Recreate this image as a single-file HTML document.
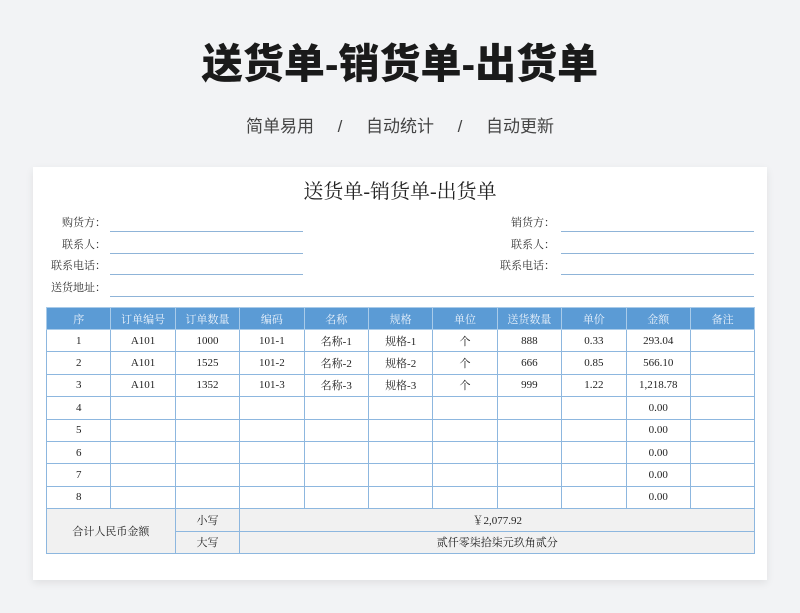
<!DOCTYPE html>
<html><head><meta charset="utf-8"><style>
*{margin:0;padding:0;box-sizing:border-box}
body{width:800px;height:613px;background:#f2f3f5;position:relative;overflow:hidden;font-family:"Liberation Serif","Noto Serif CJK SC",serif;color:#222}
.h1{position:absolute;top:30px;left:0;width:800px;text-align:center;font:900 41px "Liberation Sans","Noto Sans CJK SC",sans-serif;color:#1a1a1a}
.sub{position:absolute;top:112px;left:0;width:800px;text-align:center;font:17px "Liberation Sans","Noto Sans CJK SC",sans-serif;color:#444}
.card{position:absolute;left:33px;top:167px;width:734px;height:413px;background:#fff;box-shadow:0 3px 8px rgba(0,0,0,.08)}
.t2{position:absolute;top:175px;left:0;width:800px;text-align:center;font-size:20px;color:#222}
.lb{position:absolute;font-size:11px;text-align:right;width:90px;color:#333}
.ln{position:absolute;height:1px;background:#8fb4d8}
table{position:absolute;left:46px;top:307px;border-collapse:collapse;font-size:11px}
td{border:1px solid #8db7df;text-align:center;height:22.4px;width:64.4px;padding:0;color:#222}
tr.hd td{background:#5b9bd5;color:#eaf2fb;border-color:#a9cbe9;height:22px}
td.g{background:#f1f1f1}
</style></head><body>
<div class="h1">送货单-销货单-出货单</div>
<div class="sub">简单易用&nbsp;&nbsp;&nbsp;&nbsp;&nbsp;/&nbsp;&nbsp;&nbsp;&nbsp;&nbsp;自动统计&nbsp;&nbsp;&nbsp;&nbsp;&nbsp;/&nbsp;&nbsp;&nbsp;&nbsp;&nbsp;自动更新</div>
<div class="card"></div>
<div class="t2">送货单-销货单-出货单</div>
<div class="lb" style="left:16px;top:214px">购货方：</div>
<div class="lb" style="left:16px;top:236px">联系人：</div>
<div class="lb" style="left:16px;top:257px">联系电话：</div>
<div class="lb" style="left:16px;top:279px">送货地址：</div>
<div class="lb" style="left:465px;top:214px">销货方：</div>
<div class="lb" style="left:465px;top:236px">联系人：</div>
<div class="lb" style="left:465px;top:257px">联系电话：</div>
<div class="ln" style="left:110px;top:231px;width:193px"></div>
<div class="ln" style="left:110px;top:253px;width:193px"></div>
<div class="ln" style="left:110px;top:274px;width:193px"></div>
<div class="ln" style="left:110px;top:296px;width:644px"></div>
<div class="ln" style="left:561px;top:231px;width:193px"></div>
<div class="ln" style="left:561px;top:253px;width:193px"></div>
<div class="ln" style="left:561px;top:274px;width:193px"></div>
<table>
<tr class="hd"><td>序</td><td>订单编号</td><td>订单数量</td><td>编码</td><td>名称</td><td>规格</td><td>单位</td><td>送货数量</td><td>单价</td><td>金额</td><td>备注</td></tr>
<tr><td>1</td><td>A101</td><td>1000</td><td>101-1</td><td>名称-1</td><td>规格-1</td><td>个</td><td>888</td><td>0.33</td><td>293.04</td><td></td></tr>
<tr><td>2</td><td>A101</td><td>1525</td><td>101-2</td><td>名称-2</td><td>规格-2</td><td>个</td><td>666</td><td>0.85</td><td>566.10</td><td></td></tr>
<tr><td>3</td><td>A101</td><td>1352</td><td>101-3</td><td>名称-3</td><td>规格-3</td><td>个</td><td>999</td><td>1.22</td><td>1,218.78</td><td></td></tr>
<tr><td>4</td><td></td><td></td><td></td><td></td><td></td><td></td><td></td><td></td><td>0.00</td><td></td></tr>
<tr><td>5</td><td></td><td></td><td></td><td></td><td></td><td></td><td></td><td></td><td>0.00</td><td></td></tr>
<tr><td>6</td><td></td><td></td><td></td><td></td><td></td><td></td><td></td><td></td><td>0.00</td><td></td></tr>
<tr><td>7</td><td></td><td></td><td></td><td></td><td></td><td></td><td></td><td></td><td>0.00</td><td></td></tr>
<tr><td>8</td><td></td><td></td><td></td><td></td><td></td><td></td><td></td><td></td><td>0.00</td><td></td></tr>
<tr><td class="g" colspan="2" rowspan="2">合计人民币金额</td><td class="g">小写</td><td class="g" colspan="8">￥2,077.92</td></tr>
<tr><td class="g">大写</td><td class="g" colspan="8">贰仟零柒拾柒元玖角贰分</td></tr>
</table>
</body></html>
